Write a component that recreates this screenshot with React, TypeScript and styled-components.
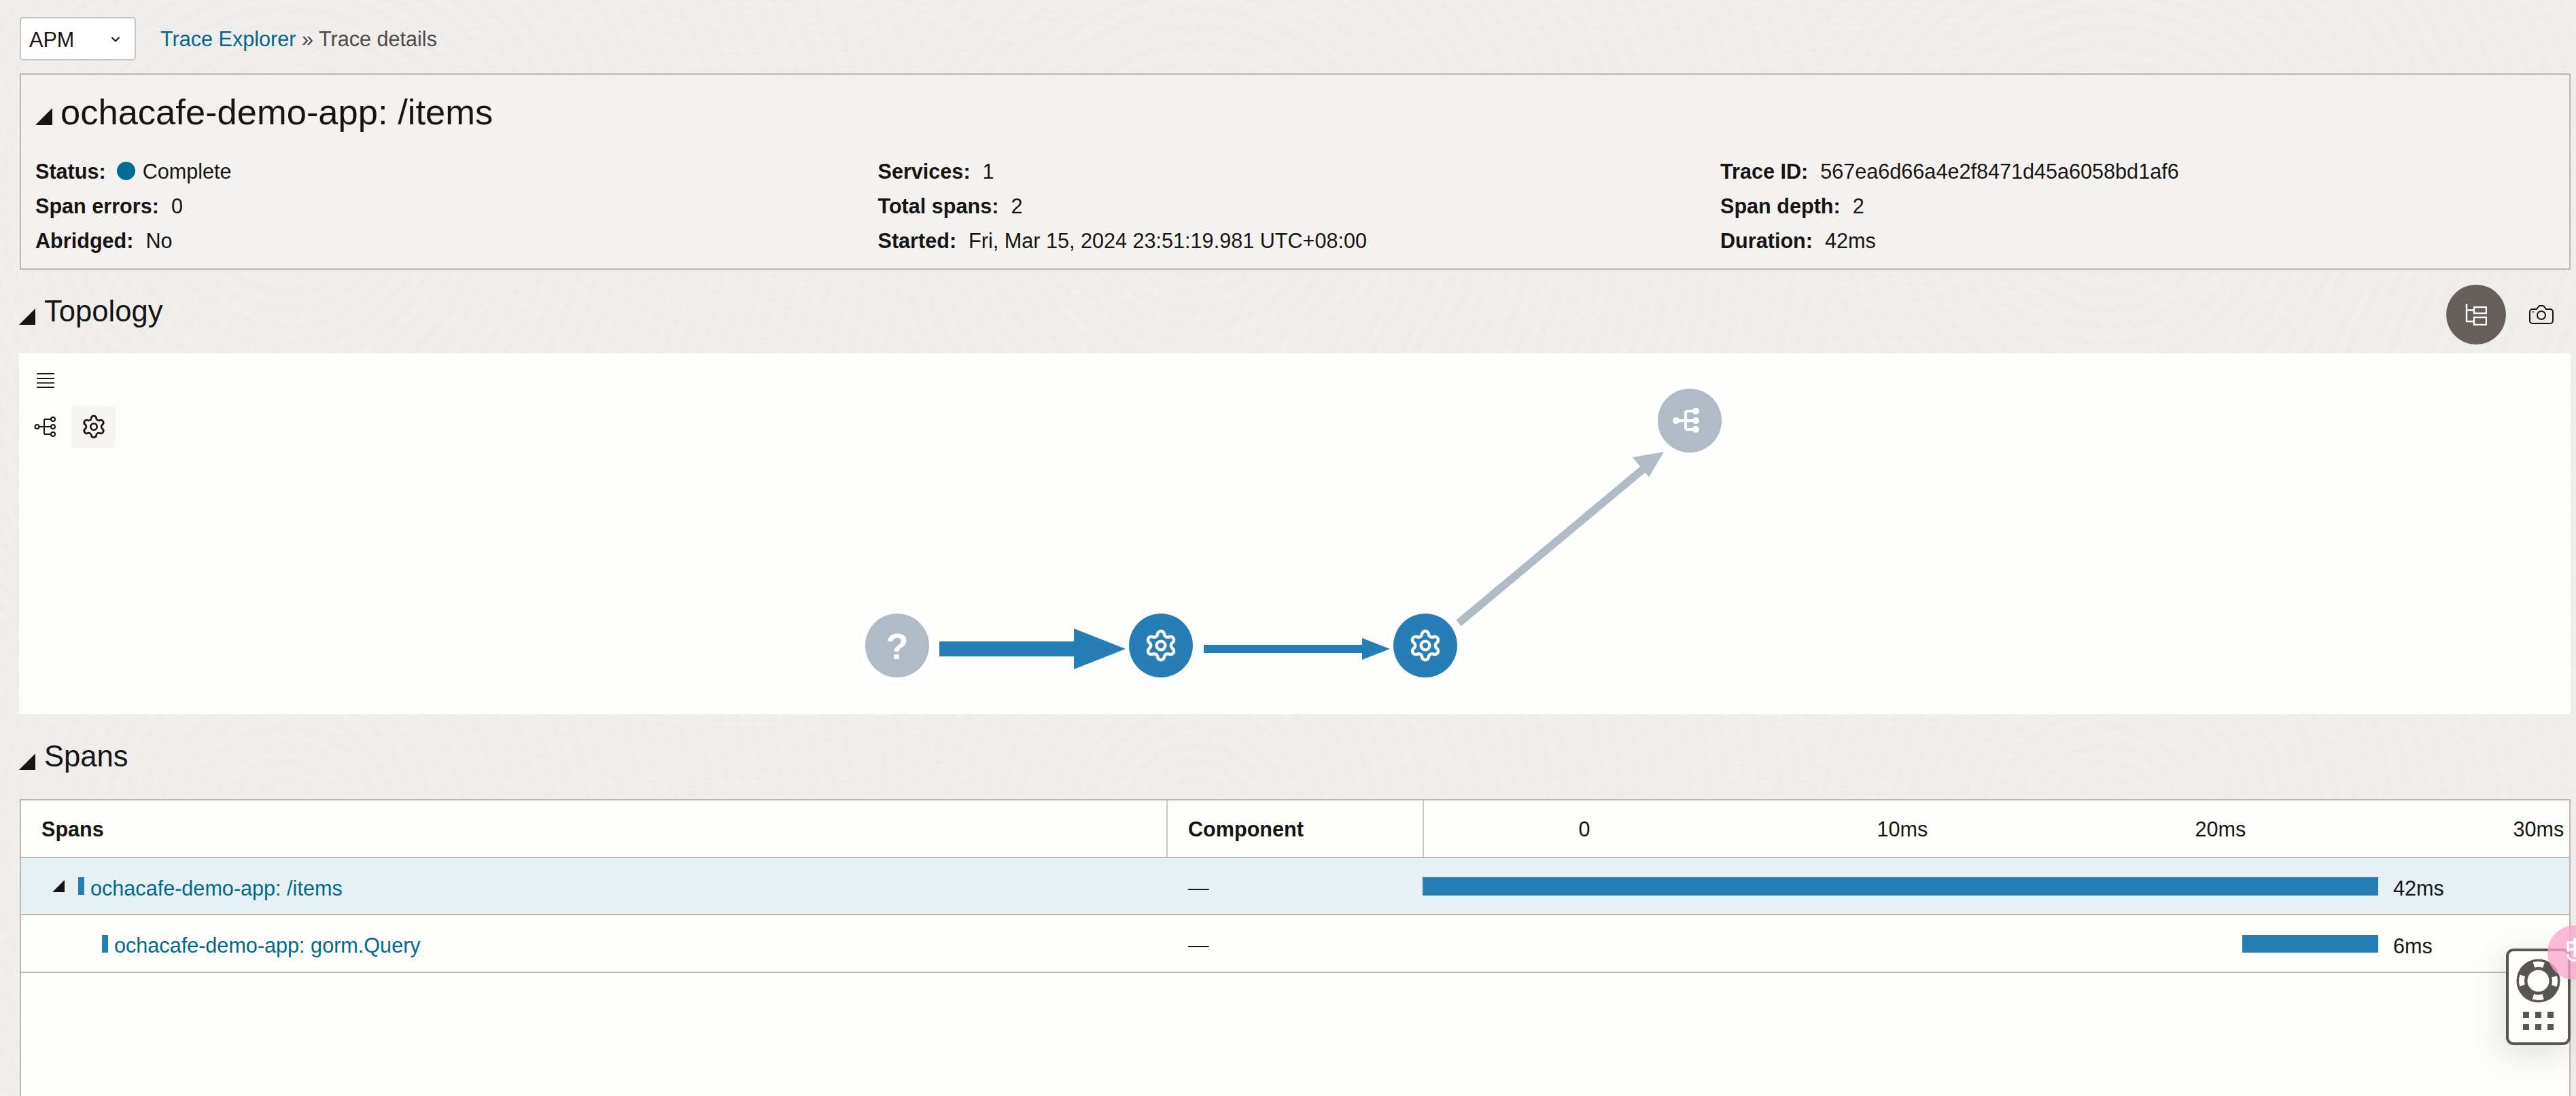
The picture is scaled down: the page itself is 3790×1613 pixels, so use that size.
import React from 'react'
import styled, { createGlobalStyle } from 'styled-components'
import { ChevronDown, Settings } from 'lucide-react'

const BLUE = '#277db5'
const GREY_NODE = '#b0bbc6'
const LINE = '#bcb7b1'
const INK = '#161513'
const LINK = '#00688c'

const Global = createGlobalStyle`
  html, body {
    margin: 0;
    padding: 0;
    height: 1613px;
    overflow: hidden;
    background: #f1f0ee;
  }
  * { box-sizing: border-box; }
`

const Page = styled.div`
  height: 1613px;
  overflow: hidden;
  padding: 25px 8px 0 28px;
  color: ${INK};
  font: 30.6px/40px 'Liberation Sans', Arial, sans-serif;
  background-color: #f1f0ee;
  background-image:
    repeating-radial-gradient(circle at 420px 300px, rgba(120, 110, 100, 0.02) 0, transparent 13px, rgba(120, 110, 100, 0.02) 26px),
    repeating-radial-gradient(ellipse at 1100px 620px, rgba(120, 110, 100, 0.014) 0, transparent 10px, rgba(120, 110, 100, 0.014) 20px);
  background-size: 1340px 900px, 1700px 1100px;
`

const TopBar = styled.div`
  display: flex;
  align-items: center;
  gap: 36px;
  height: 64px;
  padding-left: 1px;
`

const Select = styled.div`
  width: 171px;
  height: 64px;
  display: flex;
  align-items: center;
  justify-content: space-between;
  padding: 2px 18px 0 12px;
  background: #fff;
  border: 2px solid #c9c5c0;
  border-radius: 5px;
`

const Crumbs = styled.div`
  color: #4f4a46;
`

const Link = styled.span`
  color: ${LINK};
`

const Summary = styled.section`
  height: 289px;
  margin: 19px 0 0 1px;
  padding: 25px 21px 0;
  background: #f3f2f0;
  border: 2px solid ${LINE};
`

const TitleRow = styled.div`
  display: flex;
  align-items: flex-end;
  gap: 12px;
  height: 60px;
`

const Title = styled.h1`
  margin: 0;
  font-size: 52.5px;
  line-height: 60px;
  font-weight: 400;
`

const Caret = styled.span<{ $size: number }>`
  flex: none;
  width: 0;
  height: 0;
  border-left: ${({ $size }) => $size}px solid transparent;
  border-bottom: ${({ $size }) => $size}px solid ${INK};
`

const TitleCaret = styled(Caret)`
  margin-bottom: 11px;
`

const Facts = styled.div`
  display: grid;
  grid-template-columns: repeat(3, 1239.500px);
  grid-auto-rows: 51.3px;
  margin-top: 31px;
`

const Fact = styled.div`
  display: flex;
  align-items: center;
  gap: 18px;
`

const FactLabel = styled.b`
  font-weight: 700;
`

const StatusValue = styled.span`
  display: flex;
  align-items: center;
  gap: 11px;
  margin-left: -2px;
`

const StatusDot = styled.i`
  width: 27px;
  height: 27px;
  border-radius: 50%;
  background: #006b94;
`

const SectionHead = styled.div<{ $height: number }>`
  height: ${({ $height }) => $height}px;
  display: flex;
  align-items: flex-start;
  justify-content: space-between;
`

const Heading = styled.h2<{ $top: number }>`
  margin: ${({ $top }) => $top}px 0 0;
  display: flex;
  align-items: flex-end;
  gap: 13px;
  font-size: 43.6px;
  line-height: 50px;
  font-weight: 400;
`

const HeadCaret = styled(Caret)`
  margin-bottom: 5px;
`

const ViewTools = styled.div`
  display: flex;
  align-items: center;
  gap: 34px;
  margin: 22px 25px 0 0;
`

const ViewToggle = styled.button`
  width: 88px;
  height: 88px;
  padding: 0;
  border: 0;
  border-radius: 50%;
  display: flex;
  align-items: center;
  justify-content: center;
  background: #665f5b;
`

const CameraButton = styled.span`
  display: flex;
`

const Canvas = styled.section`
  position: relative;
  height: 531px;
  background: #fdfdfb;
`

const GraphArea = styled.svg`
  position: absolute;
  inset: 0;
  width: 100%;
  height: 100%;
`

const CanvasTools = styled.div`
  position: relative;
  padding: 29px 0 0 22px;
`

const MenuButton = styled.span`
  display: block;
  margin-left: 4px;
`

const ToolRow = styled.div`
  display: flex;
  align-items: center;
  gap: 23px;
  margin-top: 25px;
`

const GearButton = styled.span`
  width: 65px;
  height: 62px;
  display: flex;
  align-items: center;
  justify-content: center;
  border-radius: 5px;
  background: #f6f5f3;
`

const Table = styled.section`
  height: 440px;
  margin-left: 1px;
  background: #fdfdfb;
  border: 2px solid ${LINE};
  border-bottom: 0;
`

const TableRow = styled.div<{ $height: number; $selected?: boolean }>`
  display: grid;
  grid-template-columns: 1685px 377px 1fr;
  height: ${({ $height }) => $height}px;
  background: ${({ $selected }) => ($selected ? '#e6f1f5' : 'transparent')};
  border-bottom: 2px solid ${LINE};
`

const HeadCell = styled.div<{ $divider?: boolean }>`
  display: flex;
  align-items: center;
  padding-left: 30px;
  font-weight: 700;
  border-left: ${({ $divider }) => ($divider ? '2px solid #cbc7c3' : '0')};
`

const Ticks = styled.div`
  display: flex;
  overflow: hidden;
  padding-left: 2px;
  border-left: 2px solid #cbc7c3;
`

const Tick = styled.div`
  flex: none;
  width: 468px;
  display: flex;
  align-items: center;
  justify-content: center;
`

const NameCell = styled.div<{ $indent: number }>`
  display: flex;
  align-items: center;
  padding-left: ${({ $indent }) => $indent}px;
`

const RowCaret = styled(Caret)`
  margin-right: 20px;
`

const Marker = styled.i`
  flex: none;
  width: 9px;
  height: 26px;
  margin-right: 9px;
  background: ${BLUE};
`

const SpanLink = styled(Link)`
  margin-top: 5px;
`

const DashCell = styled.div`
  display: flex;
  align-items: center;
  padding: 3px 0 0 32px;
`

const TimeCell = styled.div`
  display: flex;
  align-items: center;
`

const Bar = styled.i<{ $height: number }>`
  flex: none;
  height: ${({ $height }) => $height}px;
  margin-top: 1px;
  background: ${BLUE};
`

const BarLabel = styled.span`
  margin: 6px 0 0 22px;
`

const HelpWidget = styled.div`
  position: fixed;
  top: 1396px;
  right: 8px;
  width: 95px;
  height: 142px;
  display: flex;
  flex-direction: column;
  align-items: center;
  padding-top: 11px;
  background: #fdfdfb;
  border: 4px solid #5a5551;
  border-radius: 11px;
  box-shadow: -6px 14px 44px rgba(0, 0, 0, 0.12);
`

const Dots = styled.div`
  display: grid;
  grid-template-columns: repeat(3, 9px);
  gap: 9px;
  margin-top: 13px;
`

const Dot = styled.i`
  height: 9px;
  background: #5a5551;
`

const ImeBubble = styled.div`
  position: fixed;
  top: 1362px;
  left: 3748px;
  width: 80px;
  height: 80px;
  border-radius: 50%;
  overflow: hidden;
  background: rgba(249, 165, 203, 0.78);
  color: #fff;
  box-shadow: 0 4px 10px rgba(0, 0, 0, 0.05);
`

const ImeGlyph = styled.span`
  position: absolute;
  top: 15px;
  left: 26px;
  font: 700 29px/32px 'Noto Sans CJK SC', sans-serif;
`

const ImeTail = styled.i`
  position: absolute;
  top: 42px;
  left: 29px;
  width: 20px;
  height: 11px;
  border: 3px solid #fff;
  border-top: 0;
  border-radius: 0 0 0 9px;
`

const TreeViewIcon = () => (
  <svg width="32" height="32" viewBox="0 0 32 32" fill="none" stroke="#fff" strokeWidth="2.4">
    <path d="M2 0v27M2 9.5h11M2 26h11" />
    <rect x="13" y="5" width="18" height="9" />
    <rect x="13" y="20" width="18" height="11" />
  </svg>
)

const CameraIcon = () => (
  <svg width="36" height="28" viewBox="0 0 36 28" fill="none" stroke={INK} strokeWidth="2">
    <path d="M5 6h6l3-4q1-1 2-1h4q1 0 2 1l3 4h6a4 4 0 0 1 4 4v13a4 4 0 0 1-4 4H5a4 4 0 0 1-4-4V10a4 4 0 0 1 4-4z" />
    <circle cx="18" cy="15" r="6" />
    <circle cx="6" cy="10" r="1" fill={INK} stroke="none" />
  </svg>
)

const MenuIcon = () => (
  <svg width="26" height="23" viewBox="0 0 26 23" stroke={INK} strokeWidth="2" display="block">
    <path d="M0 1h26M0 8h26M0 14.500h26M0 21h26" />
  </svg>
)

const ServiceTreeIcon = () => (
  <svg width="32" height="32" viewBox="0 0 32 32" fill="#fdfdfb" stroke={INK} strokeWidth="2">
    <path d="M7 16h20M15 5v22M15 5h11M15 27h11" fill="none" />
    <circle cx="4.500" cy="16" r="3" />
    <circle cx="28" cy="5" r="3" />
    <circle cx="28" cy="16" r="3" />
    <circle cx="28" cy="27" r="3" />
  </svg>
)

const LifeBuoyIcon = () => (
  <svg width="65" height="65" viewBox="0 0 65 65">
    <circle cx="32.500" cy="32.500" r="32" fill="#5a5551" />
    <circle
      cx="32.500"
      cy="32.500"
      r="24.500"
      fill="none"
      stroke="#fdfdfb"
      strokeWidth="8"
      strokeDasharray="15 23.480"
      strokeDashoffset="7.500"
    />
    <circle cx="32.500" cy="32.500" r="16" fill="#fdfdfb" />
  </svg>
)

interface NodeProps {
  x: number
  y: number
  color: string
  children: React.ReactNode
}

const GraphNode = ({ x, y, color, children }: NodeProps) => (
  <g>
    <circle cx={x} cy={y} r="55" fill="#fff" />
    <circle cx={x} cy={y} r="47" fill={color} />
    {children}
  </g>
)

const NodeGear = ({ x, y }: { x: number; y: number }) => (
  <Settings x={x - 25.5} y={y - 25.5} width={51} height={51} color="#fff" strokeWidth={2.1} />
)

const Topology = () => (
  <GraphArea viewBox="28 520 3754 531">
    <path d="M2146 917 L2418 690" stroke={GREY_NODE} strokeWidth="11.500" />
    <path d="M2448 665 L2426 702 L2402 673 Z" fill={GREY_NODE} />
    <GraphNode x={1320} y={950} color={GREY_NODE}>
      <text x={1320} y={970} textAnchor="middle" fill="#fff" fontSize="54" fontWeight="700" fontFamily="'Liberation Sans', sans-serif">
        ?
      </text>
    </GraphNode>
    <GraphNode x={1708} y={950} color={BLUE}>
      <NodeGear x={1708} y={950} />
    </GraphNode>
    <GraphNode x={2097} y={950} color={BLUE}>
      <NodeGear x={2097} y={950} />
    </GraphNode>
    <GraphNode x={2486} y={619} color={GREY_NODE}>
      <g stroke="#fff" strokeWidth="4" fill="none">
        <path d="M2466 619H2495M2480 605V632M2480 605H2495M2480 632H2495" />
      </g>
      <g fill="#fff">
        <circle cx={2466} cy={619} r="5" />
        <circle cx={2495} cy={605} r="5" />
        <circle cx={2495} cy={619} r="5" />
        <circle cx={2495} cy={632} r="5" />
      </g>
    </GraphNode>
    <path d="M1382 944H1580V925L1656 955L1580 985V966H1382Z" fill={BLUE} />
    <path d="M1771 949H2004V939L2045 955L2004 971V961H1771Z" fill={BLUE} />
  </GraphArea>
)

const App = () => {
  return (
    <Page>
      <Global />
      <TopBar>
        <Select>
          APM
          <ChevronDown size={20} strokeWidth={2.5} color={INK} />
        </Select>
        <Crumbs>
          <Link>Trace Explorer</Link> » Trace details
        </Crumbs>
      </TopBar>

      <Summary>
        <TitleRow>
          <TitleCaret $size={25} />
          <Title>ochacafe-demo-app: /items</Title>
        </TitleRow>
        <Facts>
          <Fact>
            <FactLabel>Status:</FactLabel>
            <StatusValue>
              <StatusDot />
              Complete
            </StatusValue>
          </Fact>
          <Fact>
            <FactLabel>Services:</FactLabel>1
          </Fact>
          <Fact>
            <FactLabel>Trace ID:</FactLabel>567ea6d66a4e2f8471d45a6058bd1af6
          </Fact>
          <Fact>
            <FactLabel>Span errors:</FactLabel>0
          </Fact>
          <Fact>
            <FactLabel>Total spans:</FactLabel>2
          </Fact>
          <Fact>
            <FactLabel>Span depth:</FactLabel>2
          </Fact>
          <Fact>
            <FactLabel>Abridged:</FactLabel>No
          </Fact>
          <Fact>
            <FactLabel>Started:</FactLabel>Fri, Mar 15, 2024 23:51:19.981 UTC+08:00
          </Fact>
          <Fact>
            <FactLabel>Duration:</FactLabel>42ms
          </Fact>
        </Facts>
      </Summary>

      <SectionHead $height={123}>
        <Heading $top={36}>
          <HeadCaret $size={24} />
          Topology
        </Heading>
        <ViewTools>
          <ViewToggle>
            <TreeViewIcon />
          </ViewToggle>
          <CameraButton>
            <CameraIcon />
          </CameraButton>
        </ViewTools>
      </SectionHead>

      <Canvas>
        <Topology />
        <CanvasTools>
          <MenuButton>
            <MenuIcon />
          </MenuButton>
          <ToolRow>
            <ServiceTreeIcon />
            <GearButton>
              <Settings size={38} strokeWidth={1.7} color={INK} />
            </GearButton>
          </ToolRow>
        </CanvasTools>
      </Canvas>

      <SectionHead $height={125}>
        <Heading $top={37}>
          <HeadCaret $size={24} />
          Spans
        </Heading>
      </SectionHead>

      <Table>
        <TableRow $height={85}>
          <HeadCell>Spans</HeadCell>
          <HeadCell $divider>Component</HeadCell>
          <Ticks>
            <Tick>0</Tick>
            <Tick>10ms</Tick>
            <Tick>20ms</Tick>
            <Tick>30ms</Tick>
          </Ticks>
        </TableRow>
        <TableRow $height={84} $selected>
          <NameCell $indent={46}>
            <RowCaret $size={18} />
            <Marker />
            <SpanLink>ochacafe-demo-app: /items</SpanLink>
          </NameCell>
          <DashCell>—</DashCell>
          <TimeCell>
            <Bar $height={27} style={{ width: 1406 }} />
            <BarLabel>42ms</BarLabel>
          </TimeCell>
        </TableRow>
        <TableRow $height={85}>
          <NameCell $indent={119}>
            <Marker />
            <SpanLink>ochacafe-demo-app: gorm.Query</SpanLink>
          </NameCell>
          <DashCell>—</DashCell>
          <TimeCell>
            <Bar $height={26} style={{ width: 200, marginLeft: 1206 }} />
            <BarLabel>6ms</BarLabel>
          </TimeCell>
        </TableRow>
      </Table>

      <HelpWidget>
        <LifeBuoyIcon />
        <Dots>
          {Array.from({ length: 6 }, (_, i) => (
            <Dot key={i} />
          ))}
        </Dots>
      </HelpWidget>
      <ImeBubble>
        <ImeGlyph>中</ImeGlyph>
        <ImeTail />
      </ImeBubble>
    </Page>
  )
}

export default App
